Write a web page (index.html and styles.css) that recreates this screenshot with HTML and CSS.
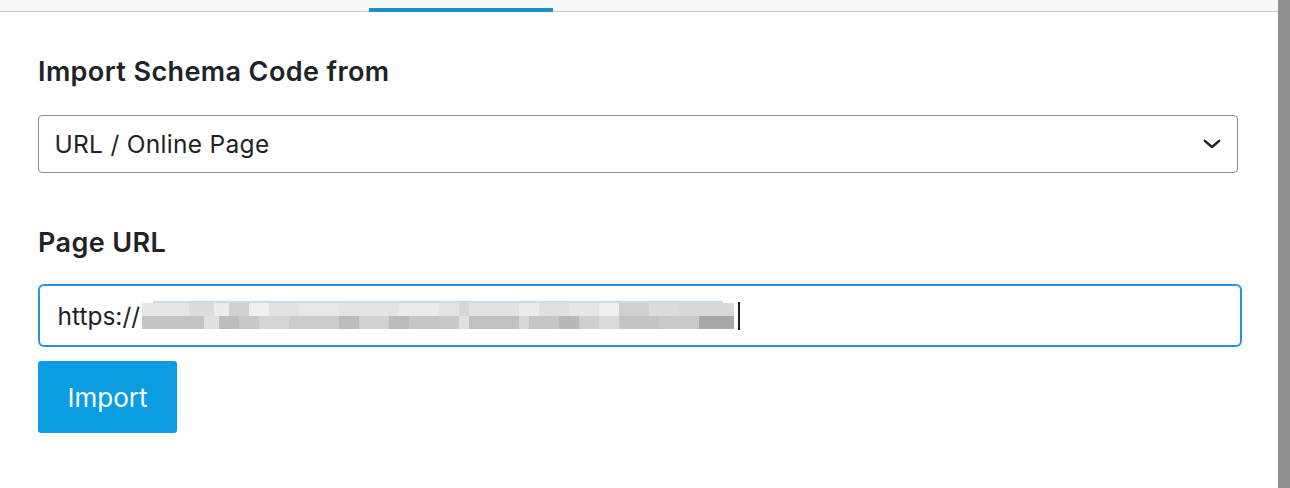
FILE: index.html
```html
<!DOCTYPE html>
<html lang="en">
<head>
<meta charset="utf-8">
<title>Import Schema</title>
<link rel="stylesheet" href="styles.css">
</head>
<body>
<div class="page">
  <div class="main">
    <div class="tabs"><div class="tab-active"></div></div>
    <div class="content">
      <h2 class="label">Import Schema Code from</h2>
      <div class="select">
        <span class="select-text">URL / Online Page</span>
        <svg class="chevron" width="18" height="10" viewBox="0 0 18 10"><path d="M1.8 1.8 L9 8 L16.2 1.8" fill="none" stroke="#1d2327" stroke-width="2.4" stroke-linecap="round" stroke-linejoin="round"/></svg>
      </div>
      <h2 class="label label-url">Page URL</h2>
      <div class="input">
        <span class="input-text">https://</span>
        <span class="redacted"></span>
        <span class="caret"></span>
      </div>
      <button class="btn">Import</button>
    </div>
  </div>
  <div class="scrollbar"></div>
</div>
</body>
</html>
```
FILE: styles.css
```css
html, body {
  margin: 0;
  padding: 0;
  background: #fff;
}
body {
  font-family: Inter, "Noto Sans", "Liberation Sans", sans-serif;
  color: #1d2327;
}
.page {
  display: flex;
  width: 1290px;
  height: 488px;
  overflow: hidden;
}
.main {
  flex: 1;
  min-width: 0;
}
.scrollbar {
  width: 12px;
  background: #8f8f8f;
}
.tabs {
  height: 11px;
  background: #f6f7f8;
  border-bottom: 1px solid #c9cbcf;
  position: relative;
}
.tab-active {
  position: absolute;
  left: 369px;
  bottom: -1px;
  width: 184px;
  height: 4px;
  background: #1b8fc9;
}
.content {
  padding: 45px 0 0 38px;
}
.label {
  margin: 0;
  font-size: 27px;
  line-height: 30px;
  font-weight: 600;
  letter-spacing: 0.4px;
  color: #1d2327;
}
.select {
  margin-top: 28px;
  width: 1200px;
  height: 58px;
  box-sizing: border-box;
  border: 1.5px solid #8c8f94;
  border-radius: 4px;
  display: flex;
  align-items: center;
  justify-content: space-between;
  padding: 0 16px 0 15.5px;
}
.select-text {
  font-size: 24.5px;
  letter-spacing: 0.3px;
  color: #1d2327;
}
.chevron {
  display: block;
}
.label-url {
  margin-top: 55px;
}
.input {
  margin-top: 26px;
  width: 1204px;
  height: 63px;
  box-sizing: border-box;
  border: 2.5px solid #2498d5;
  border-radius: 6px;
  display: flex;
  align-items: center;
  padding-left: 17.5px;
}
.input-text {
  font-size: 24.5px;
  color: #1d2327;
}
.redacted {
  width: 592px;
  height: 26px;
  margin-left: 2px;
  background:
    linear-gradient(to right,
      #e6e6e6 0 47px, #dcdcdc 47px 72px, #ececec 72px 87px, #d0d0d0 87px 107px,
      #f0f0f0 107px 127px, #e2e2e2 127px 157px, #e8e8e8 157px 197px, #e4e4e4 197px 257px,
      #ebebeb 257px 297px, #e4e4e4 297px 317px, #d8d8d8 317px 327px, #e2e2e2 327px 377px,
      #ececec 377px 397px, #e0e0e0 397px 427px, #e6e6e6 427px 457px, #f0f0f0 457px 477px,
      #d0d0d0 477px 507px, #dcdcdc 507px 537px, #d8d8d8 537px 592px) top / 100% 50% no-repeat,
    linear-gradient(to right,
      #c4c4c4 0 62px, #e0e0e0 62px 77px, #bdbdbd 77px 97px, #c8c8c8 97px 117px,
      #d4d4d4 117px 147px, #cbcbcb 147px 197px, #bcbcbc 197px 217px, #d2d2d2 217px 247px,
      #bbbbbb 247px 267px, #c6c6c6 267px 297px, #c8c8c8 297px 317px, #e0e0e0 317px 327px,
      #c0c0c0 327px 377px, #d8d8d8 377px 387px, #c6c6c6 387px 417px, #b8b8b8 417px 437px,
      #cfcfcf 437px 457px, #dcdcdc 457px 477px, #c4c4c4 477px 517px, #cacaca 517px 557px,
      #a8a8a8 557px 592px) bottom / 100% 50% no-repeat;
  box-shadow: 0 -13px 0 -11px #c5dcea;
}
.caret {
  width: 2px;
  height: 28px;
  background: #1d2327;
  margin-left: 4px;
}
.btn {
  display: block;
  margin-top: 14px;
  width: 139px;
  height: 72px;
  border: none;
  border-radius: 3px;
  background: #0b9de2;
  color: #fff;
  font-family: Inter, "Noto Sans", "Liberation Sans", sans-serif;
  font-size: 26px;
  font-weight: 400;
  padding: 0;
}
```
